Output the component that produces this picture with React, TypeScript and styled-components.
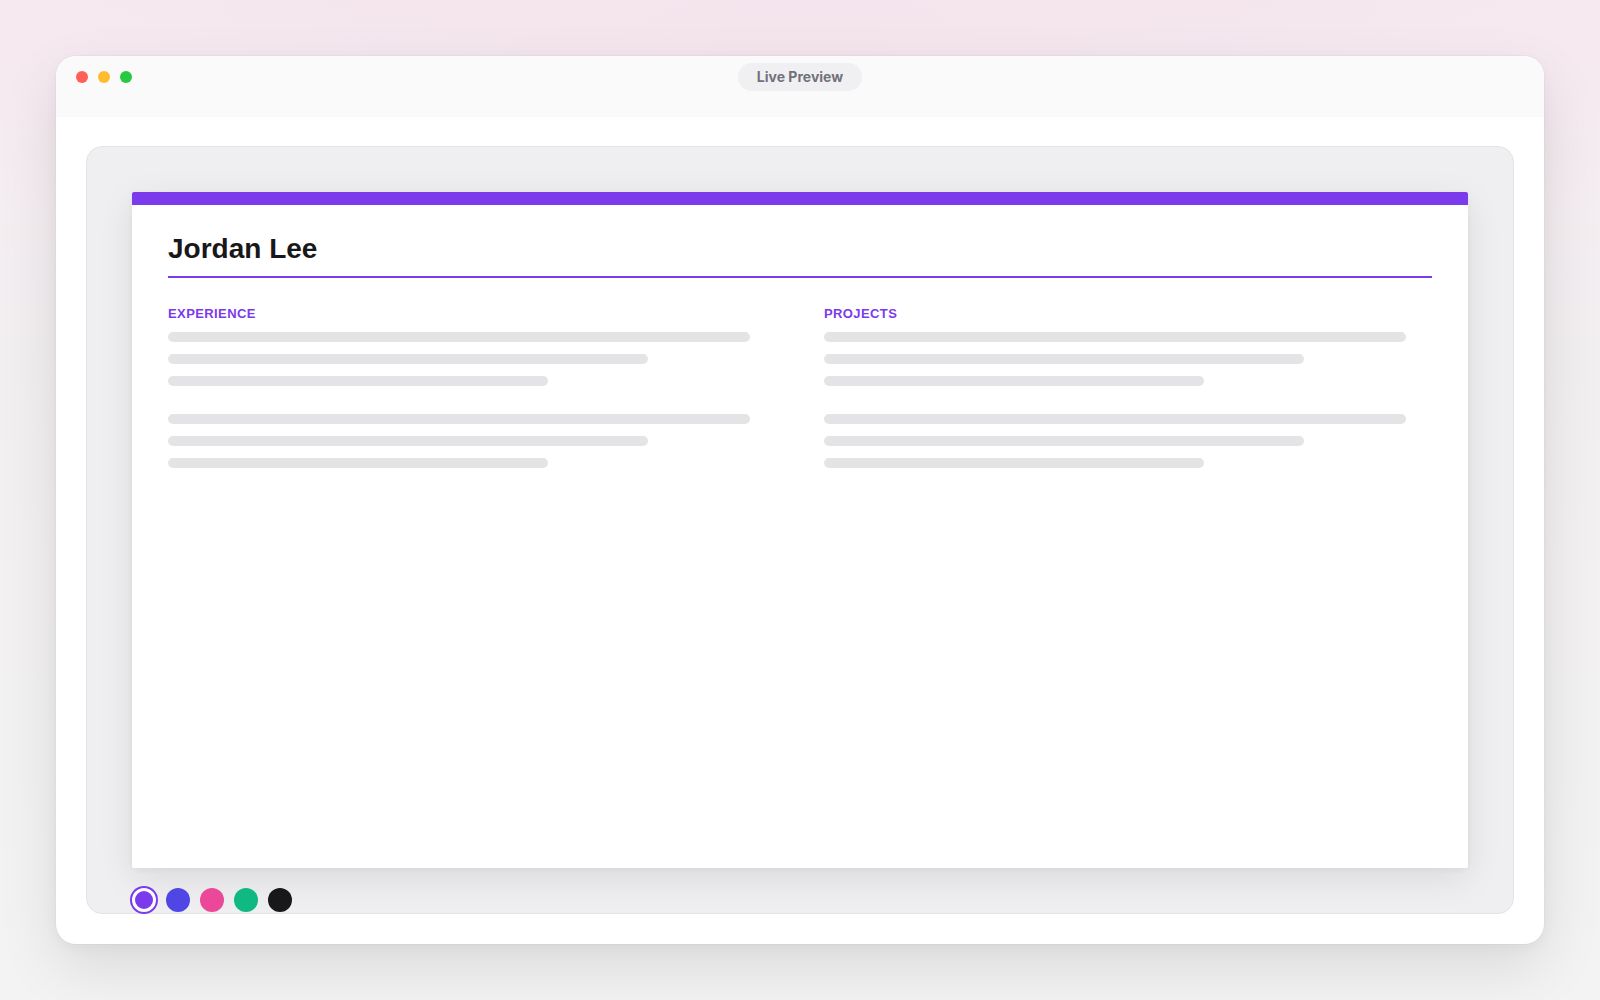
import styled, { createGlobalStyle } from "styled-components";

const GlobalStyle = createGlobalStyle`
  * { box-sizing: border-box; }
  html, body { margin: 0; padding: 0; }
  body {
    font-family: "Liberation Sans", Arial, sans-serif;
    background: #f3f3f4;
  }
`;

const Page = styled.div`
  min-height: 100vh;
  padding: 56px;
  background:
    radial-gradient(ellipse 70% 30% at 50% 0%, rgba(240, 218, 230, 0.45), rgba(240, 218, 230, 0) 100%),
    linear-gradient(180deg, #f7ebf1 0%, #f2eff1 35%, #f3f3f3 100%);
`;

const Window = styled.div`
  height: 888px;
  display: flex;
  flex-direction: column;
  background: #ffffff;
  border-radius: 20px;
  overflow: hidden;
  box-shadow: 0 24px 60px rgba(0, 0, 0, 0.1), 0 4px 14px rgba(0, 0, 0, 0.04),
    0 0 0 1px rgba(0, 0, 0, 0.025);
`;

const TitleBar = styled.div`
  height: 61px;
  flex-shrink: 0;
  position: relative;
  display: flex;
  align-items: flex-start;
  justify-content: center;
  padding-top: 7px;
  background: #fafafa;
`;

const Lights = styled.div`
  position: absolute;
  left: 20px;
  top: 15px;
  display: flex;
  gap: 10px;
`;

const Light = styled.span<{ $color: string }>`
  width: 12px;
  height: 12px;
  border-radius: 50%;
  background: ${(p) => p.$color};
`;

const Pill = styled.div`
  font-family: Inter, "Noto Sans", sans-serif;
  font-size: 14px;
  font-weight: 700;
  line-height: 20px;
  color: #71717a;
  background: #f0f0f2;
  padding: 4px 19px;
  border-radius: 999px;
`;

const Body = styled.div`
  flex: 1;
  display: flex;
  padding: 29px 30px 30px;
`;

const Stage = styled.div`
  flex: 1;
  display: flex;
  flex-direction: column;
  padding: 45px 45px 1px;
  background: #efeff1;
  border: 1px solid #e4e4e7;
  border-radius: 16px;
`;

const Sheet = styled.div`
  flex: 1;
  background: #ffffff;
  border-top: 13px solid #7c3aed;
  border-radius: 2px;
  padding: 27px 36px 0 36px;
  box-shadow: 0 10px 36px rgba(0, 0, 0, 0.09), 0 2px 6px rgba(0, 0, 0, 0.04);
`;

const Header = styled.div`
  padding-bottom: 10px;
  border-bottom: 2px solid #7c3aed;
`;

const Name = styled.h1`
  margin: 0;
  font-size: 28px;
  line-height: 1.2;
  font-weight: 700;
  color: #18181b;
`;

const Columns = styled.div`
  display: grid;
  grid-template-columns: 1fr 1fr;
  gap: 48px;
  margin-top: 28px;
`;

const Section = styled.div`
  display: flex;
  flex-direction: column;
`;

const SectionTitle = styled.h2`
  margin: 0 0 11px;
  font-size: 13px;
  line-height: 1.2;
  font-weight: 700;
  letter-spacing: 0.4px;
  color: #7c3aed;
  text-transform: uppercase;
`;

const Group = styled.div`
  display: flex;
  flex-direction: column;
  gap: 12px;
  & + & {
    margin-top: 28px;
  }
`;

const Line = styled.div<{ $width: string }>`
  width: ${(p) => p.$width};
  height: 10px;
  border-radius: 5px;
  background: #e4e4e7;
`;

const Swatches = styled.div`
  display: flex;
  gap: 10px;
  margin-top: 20px;
  height: 24px;
`;

const Swatch = styled.button<{ $color: string; $active?: boolean }>`
  width: 24px;
  height: 24px;
  padding: 0;
  border-radius: 50%;
  cursor: pointer;
  background: ${(p) => p.$color};
  border: ${(p) => (p.$active ? "3px solid #ffffff" : "none")};
  box-shadow: ${(p) => (p.$active ? `0 0 0 2px ${p.$color}` : "none")};
`;

const widths = ["95.7%", "79%", "62.5%"];
const colors = ["#7c3aed", "#4f46e5", "#ec4899", "#10b981", "#18181b"];

function Placeholder() {
  return (
    <>
      {[0, 1].map((g) => (
        <Group key={g}>
          {widths.map((w, i) => (
            <Line key={i} $width={w} />
          ))}
        </Group>
      ))}
    </>
  );
}

export default function App() {
  return (
    <>
      <GlobalStyle />
      <Page>
        <Window>
          <TitleBar>
            <Lights>
              <Light $color="#ff5f57" />
              <Light $color="#febc2e" />
              <Light $color="#28c840" />
            </Lights>
            <Pill>Live Preview</Pill>
          </TitleBar>
          <Body>
            <Stage>
              <Sheet>
                <Header>
                  <Name>Jordan Lee</Name>
                </Header>
                <Columns>
                  <Section>
                    <SectionTitle>Experience</SectionTitle>
                    <Placeholder />
                  </Section>
                  <Section>
                    <SectionTitle>Projects</SectionTitle>
                    <Placeholder />
                  </Section>
                </Columns>
              </Sheet>
              <Swatches>
                {colors.map((c, i) => (
                  <Swatch key={c} $color={c} $active={i === 0} aria-label={c} />
                ))}
              </Swatches>
            </Stage>
          </Body>
        </Window>
      </Page>
    </>
  );
}
